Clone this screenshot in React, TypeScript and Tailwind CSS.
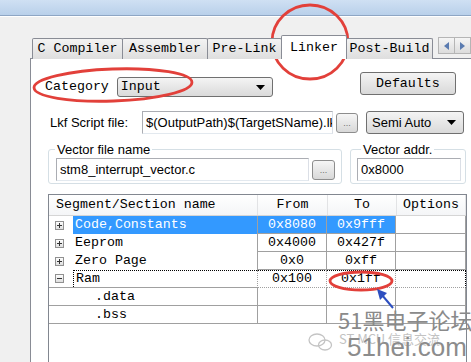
import React from "react";

const MONO = "font-['Liberation_Mono',monospace] text-[13.3px] leading-none";
const SANS = "font-['Liberation_Sans',Arial,sans-serif] text-[13px] leading-none";

function Arrow() {
  return (
    <svg width="9" height="5" viewBox="0 0 9 5">
      <polygon points="0,0 9,0 4.5,5" fill="#000" />
    </svg>
  );
}

function Expander({ minus }: { minus?: boolean }) {
  return (
    <svg width="9" height="9" viewBox="0 0 9 9">
      <defs>
        <linearGradient id="eg" x1="0" y1="0" x2="0" y2="1">
          <stop offset="0" stopColor="#ffffff" />
          <stop offset="1" stopColor="#dcdcdc" />
        </linearGradient>
      </defs>
      <rect x="0.5" y="0.5" width="8" height="8" fill="url(#eg)" stroke="#919191" />
      <line x1="2" y1="4.5" x2="7" y2="4.5" stroke="#333" />
      {!minus && <line x1="4.5" y1="2" x2="4.5" y2="7" stroke="#333" />}
    </svg>
  );
}

function Tab({ label, w, selected }: { label: string; w: number; selected?: boolean }) {
  return (
    <div
      style={{ width: w }}
      className={
        selected
          ? `h-[24px] -ml-px border border-b-0 border-[#898c95] bg-white flex items-start justify-center pt-[5px] rounded-t-[2px] relative z-10 ${MONO} text-black`
          : `h-[21px] -ml-px border border-b-0 border-[#898c95] bg-gradient-to-b from-[#f3f3f3] to-[#dedede] flex items-center justify-center rounded-t-[2px] ${MONO} text-black`
      }
    >
      {label}
    </div>
  );
}

function DotsButton({ w }: { w: number }) {
  return (
    <div
      style={{ width: w }}
      className="h-[20px] border border-[#8d8d8d] rounded-[3px] bg-gradient-to-b from-[#f6f6f6] to-[#d8d8d8] flex items-end justify-center pb-[4px] font-['Liberation_Sans',sans-serif] text-[9px] leading-none text-[#707070]"
    >
      ...
    </div>
  );
}

type Row = {
  name: string;
  from?: string;
  to?: string;
  exp?: "+" | "-";
  child?: boolean;
  sel?: boolean;
  focus?: boolean;
  noBottom?: boolean;
};

const rows: Row[] = [
  { name: "Code,Constants", from: "0x8080", to: "0x9fff", exp: "+", sel: true, noBottom: true },
  { name: "Eeprom", from: "0x4000", to: "0x427f", exp: "+", noBottom: true },
  { name: "Zero Page", from: "0x0", to: "0xff", exp: "+", noBottom: true },
  { name: "Ram", from: "0x100", to: "0x1ff", exp: "-", focus: true },
  { name: ".data", child: true },
  { name: ".bss", child: true },
];

function TableRow({ r }: { r: Row }) {
  const line = "border-[#a0a0a0]";
  return (
    <div className="grid grid-cols-[208px_70px_69px_70px] h-[18px]">
      <div className={`relative h-[18px] flex items-stretch ${r.noBottom ? "" : `border-b ${line}`}`}>
        <div className="w-[24px] flex items-center pl-[6px] shrink-0">{r.exp && <Expander minus={r.exp === "-"} />}</div>
        <div
          className={`flex-1 flex items-center ${r.sel ? "bg-[#3399ff] text-white" : "text-black"} ${
            r.focus ? "border-l border-t border-dotted border-black" : ""
          } ${r.child ? "pl-[22px]" : "pl-[2px]"}`}
        >
          {r.name}
        </div>
      </div>
      {[r.from, r.to, undefined].map((v, i) => (
        <div
          key={i}
          className={`h-[18px] flex items-center justify-center ${
            i === 2 && r.focus ? "border-r border-dotted border-r-black" : `border-r ${line}`
          } ${r.focus ? "border-b border-b-[#a0a0a0] border-t border-dotted border-t-black" : `border-b ${line}`} ${
            r.sel && i < 2 ? "bg-[#3399ff] text-white" : "text-black"
          } ${i === 0 ? `border-l ${line}` : ""}`}
        >
          {v ?? ""}
        </div>
      ))}
    </div>
  );
}

export default function App() {
  return (
    <div className="relative w-[471px] h-[362px] overflow-hidden bg-[#f0f0f0] flex flex-col">
      {/* title strip */}
      <div className="h-[16px] shrink-0 bg-gradient-to-b from-[#cfe0f3] to-[#b9d0ea] border-b border-[#8ea6c4]" />
      <div className="h-px bg-white shrink-0" />

      <div className="flex-1 flex flex-col pl-[30px] pt-[18px]">
        {/* tabs */}
        <div className="flex items-end h-[24px] pl-[3px] -mb-px relative z-10">
          <Tab label="C Compiler" w={91} />
          <Tab label="Assembler" w={86} />
          <Tab label="Pre-Link" w={75} />
          <Tab label="Linker" w={66} selected />
          <Tab label="Post-Build" w={87} />
          <div className="self-start mt-[2px] ml-[5px] flex">
            <div className="w-[17px] h-[17px] border border-[#b5b5b5] bg-gradient-to-b from-[#f5f5f5] to-[#dcdcdc] flex items-center justify-center">
              <svg width="5" height="8" viewBox="0 0 5 8"><polygon points="5,0 5,8 0,4" fill="#5a7bb0" /></svg>
            </div>
            <div className="w-[17px] h-[17px] -ml-px border border-[#b5b5b5] bg-gradient-to-b from-[#f5f5f5] to-[#dcdcdc] flex items-center justify-center">
              <svg width="5" height="8" viewBox="0 0 5 8"><polygon points="0,0 0,8 5,4" fill="#5a7bb0" /></svg>
            </div>
          </div>
        </div>

        {/* panel */}
        <div className="flex-1 bg-white border-l border-t border-[#898c95] flex flex-col pt-[13px]">
          {/* row 1 */}
          <div className="flex items-start pl-[14px]">
            <div className={`mt-[5px] h-[20px] flex items-center ${MONO}`}>Category</div>
            <div className={`mt-[5px] ml-[8px] w-[156px] h-[20px] border border-[#707070] rounded-[3px] bg-gradient-to-b from-[#f4f4f4] to-[#dadada] flex items-center pl-[3px] pr-[7px] ${MONO}`}>
              <span className="flex-1">Input</span>
              <Arrow />
            </div>
            <div className={`ml-[87px] w-[96px] h-[23px] border border-[#707070] rounded-[3px] bg-gradient-to-b from-[#f4f4f4] to-[#d9d9d9] flex items-center justify-center ${MONO}`}>
              Defaults
            </div>
          </div>

          {/* row 2 */}
          <div className="flex items-center pl-[19px] mt-[14px]">
            <div className={`w-[92px] ${SANS}`}>Lkf Script file:</div>
            <div className={`w-[191px] h-[23px] border border-[#abadb3] border-r-[#dbdfe6] border-b-[#e3e9ef] bg-white flex items-center pl-[3px] overflow-hidden whitespace-nowrap ${SANS}`}>
              $(OutputPath)$(TargetSName).lkf
            </div>
            <div className="ml-[3px]">
              <DotsButton w={22} />
            </div>
            <div className={`ml-[8px] w-[98px] h-[23px] border border-[#707070] rounded-[3px] bg-gradient-to-b from-[#f4f4f4] to-[#dadada] flex items-center pl-[5px] pr-[7px] ${SANS}`}>
              <span className="flex-1">Semi Auto</span>
              <Arrow />
            </div>
          </div>

          {/* row 3: group boxes */}
          <div className="flex items-start mt-[15px] pl-[17px]">
            <div className="w-[294px] h-[35px] border border-[#d5dfe5] rounded-[3px] flex flex-col">
              <div className={`-mt-[9px] ml-[6px] px-[2px] bg-white self-start h-[16px] flex items-center ${SANS}`}>
                Vector file name
              </div>
              <div className="flex items-center ml-[7px] mt-px">
                <div className={`w-[253px] h-[23px] border border-[#abadb3] border-r-[#dbdfe6] border-b-[#e3e9ef] bg-white flex items-center pl-[3px] ${SANS} text-[13.5px]`}>
                  stm8_interrupt_vector.c
                </div>
                <div className="ml-[3px]">
                  <DotsButton w={23} />
                </div>
              </div>
            </div>
            <div className="ml-[8px] w-[116px] h-[35px] border border-[#d5dfe5] rounded-[3px] flex flex-col">
              <div className={`-mt-[9px] ml-[10px] px-[2px] bg-white self-start h-[16px] flex items-center ${SANS}`}>
                Vector addr.
              </div>
              <div className={`ml-[6px] mt-px w-[104px] h-[23px] border border-[#abadb3] border-r-[#dbdfe6] border-b-[#e3e9ef] bg-white flex items-center pl-[3px] ${SANS}`}>
                0x8000
              </div>
            </div>
          </div>

          {/* table */}
          <div className={`mt-[10px] ml-[17px] w-[419px] flex-1 border-l border-t border-r border-[#828790] bg-white ${MONO}`}>
            <div className="grid grid-cols-[208px_70px_69px_70px] h-[21px] border-b border-[#d5d5d5] bg-gradient-to-b from-white to-[#f4f5f7]">
              <div className="flex items-center pl-[7px]">Segment/Section name</div>
              <div className="flex items-center justify-center border-l border-[#e2e3e5]">From</div>
              <div className="flex items-center justify-center border-l border-[#e2e3e5]">To</div>
              <div className="flex items-center justify-center border-l border-r border-[#e2e3e5]">Options</div>
            </div>
            {rows.map((r, i) => (
              <TableRow key={i} r={r} />
            ))}
          </div>
        </div>
      </div>

      {/* annotation overlays */}
      <svg className="absolute inset-0 pointer-events-none" width="471" height="362" viewBox="0 0 471 362">
        <ellipse cx="113" cy="85" rx="79" ry="16" fill="none" stroke="#e2403a" strokeWidth="2.8" transform="rotate(-2 113 85)" />
        <ellipse cx="310" cy="42" rx="38" ry="37" fill="none" stroke="#e2403a" strokeWidth="2.8" />
        <ellipse cx="361" cy="281" rx="31" ry="9" fill="none" stroke="#e2403a" strokeWidth="2.8" />
        <line x1="393" y1="308" x2="382" y2="295" stroke="#2d4fc0" strokeWidth="2" />
        <polygon points="377,289 387,293 380,300" fill="#2d4fc0" />
        {/* wechat icon */}
        <g fill="none" stroke="#c4c4c4" strokeWidth="1.3">
          <ellipse cx="317" cy="340" rx="8" ry="6" />
          <ellipse cx="325" cy="345" rx="6.5" ry="5" />
        </g>
      </svg>
      <div className="absolute left-[338px] top-[308px] pointer-events-none font-['Noto_Sans_CJK_SC',sans-serif] text-[22px] leading-none text-[#8a8a8a] whitespace-nowrap">
        51黑电子论坛
      </div>
      <div className="absolute left-[339px] top-[332px] pointer-events-none font-['Noto_Sans_CJK_SC',sans-serif] text-[13px] leading-none text-[#c2c2c2] whitespace-nowrap">
        ST MCU 信息交流
      </div>
      <div className="absolute left-[347px] top-[334px] pointer-events-none font-['Liberation_Sans',sans-serif] text-[26px] leading-[26px] text-[#8c8c8c] whitespace-nowrap">
        51hei.com
      </div>
    </div>
  );
}
